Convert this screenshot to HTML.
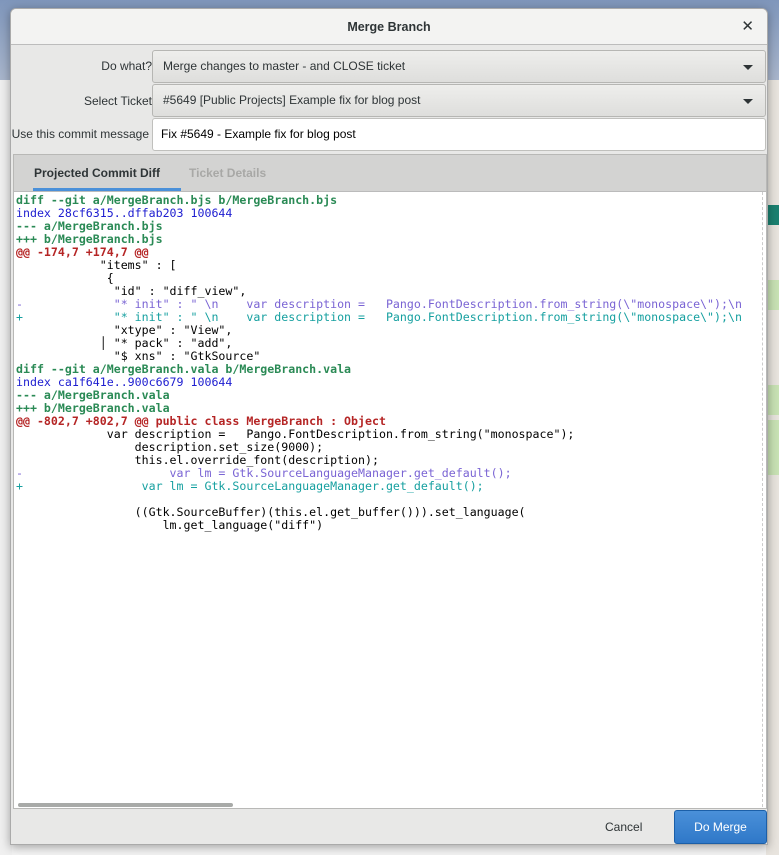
<!DOCTYPE html>
<html><head><meta charset="utf-8"><style>
*{box-sizing:border-box;margin:0;padding:0}
body{width:779px;height:855px;overflow:hidden;position:relative;background:#f4f4f4;font-family:"Liberation Sans","DejaVu Sans",sans-serif;font-size:12px;color:#2e3436}
.bgtop{position:absolute;left:0;top:0;width:779px;height:80px;background:linear-gradient(#7f96bb,#a9b6cc)}
.bgleft{position:absolute;left:0;top:80px;width:12px;height:775px;background:#f0f0f0}
.bgright{position:absolute;left:766px;top:80px;width:13px;height:775px;background:#e8e4de}
.g{position:absolute;left:766px;width:13px;background:#c8e2b4}
.dlg{position:absolute;left:10px;top:8px;width:758px;height:837px;background:#e8e8e7;border:1px solid #aaa;border-radius:6px 6px 0 0;box-shadow:0 2px 10px rgba(0,0,0,.35);overflow:hidden}
.hdr{position:absolute;left:0;top:0;width:100%;height:36px;background:#f3f3f2;border-bottom:1px solid #bcbcbc;text-align:center;line-height:36px;font-weight:bold;font-size:12.5px;color:#2e3436}
.x{position:absolute;right:13px;top:0;font-size:15px;font-weight:bold}
.lbl{position:absolute;right:615px;font-size:12px;color:#2e3436;text-align:right;white-space:nowrap}
.combo{position:absolute;left:141px;width:614px;height:33px;border:1px solid #b6b6b3;border-radius:3px;background:linear-gradient(#eeeeec,#dededc);padding-left:10px;line-height:31px;font-size:12px}
.combo:after{content:"";position:absolute;right:12px;top:14px;border-left:5px solid transparent;border-right:5px solid transparent;border-top:5px solid #2e3436}
.entry{position:absolute;left:141px;top:109px;width:614px;height:33px;border:1px solid #c0c0bd;border-radius:3px;background:#fff;padding-left:8px;line-height:31px;color:#000}
.nb{position:absolute;left:2px;top:145px;width:754px;height:655px;border:1px solid #b8b8b6;background:#fff}
.tabs{height:37px;background:#d3d3d2;border-bottom:1px solid #bbb;position:relative}
.tab{position:absolute;top:0;line-height:37px;font-weight:bold;font-size:12px}
.ul{position:absolute;left:19px;top:33px;width:148px;height:3px;background:#4a90d9}
pre{font-family:"DejaVu Sans Mono","Liberation Mono",monospace;font-size:11.6px;line-height:13px;padding:2px 0 0 2px;color:#000;white-space:pre;overflow:hidden}
.h{color:#2a8a55;font-weight:bold}.i{color:#1d1dd0}.a{color:#b52525;font-weight:bold}.m{color:#7a64d4}.p{color:#16a0a0}
.vs{position:absolute;right:3px;top:37px;height:615px;border-left:1px dashed #ccc}
.sb{position:absolute;left:4px;top:648px;width:215px;height:4px;border-radius:2px;background:#a8aaa8}
.foot{position:absolute;left:0;top:800px;width:100%;height:37px;background:#e8e8e7}
.cancel{position:absolute;left:594px;top:0;line-height:36px;font-size:12px}
.ok{position:absolute;left:663px;top:1px;width:93px;height:34px;border:1px solid #1b5fa8;border-radius:3px;background:linear-gradient(#4a90d9,#2f78c8);color:#fff;text-align:center;line-height:32px;font-size:12px}
</style></head><body>
<div class="bgtop"></div><div class="bgleft"></div><div class="bgright"></div>
<div class="g" style="top:205px;height:20px;background:#1a8070"></div>
<div class="g" style="top:280px;height:30px"></div>
<div class="g" style="top:385px;height:30px"></div>
<div class="g" style="top:420px;height:55px"></div>
<div class="dlg">
<div class="hdr">Merge Branch<span class="x">✕</span></div>
<div class="lbl" style="top:50px">Do what?</div>
<div class="combo" style="top:41px">Merge changes to master - and CLOSE ticket</div>
<div class="lbl" style="top:85px">Select Ticket</div>
<div class="combo" style="top:75px">#5649 [Public Projects] Example fix for blog post</div>
<div class="lbl" style="top:118px;right:618px">Use this commit message</div>
<div class="entry">Fix #5649 - Example fix for blog post</div>
<div class="nb">
<div class="tabs"><span class="tab" style="left:20px">Projected Commit Diff</span><span class="tab" style="left:175px;color:#a8a8a6">Ticket Details</span><div class="ul"></div></div>
<pre><span class="h">diff --git a/MergeBranch.bjs b/MergeBranch.bjs</span>
<span class="i">index 28cf6315..dffab203 100644</span>
<span class="h">--- a/MergeBranch.bjs</span>
<span class="h">+++ b/MergeBranch.bjs</span>
<span class="a">@@ -174,7 +174,7 @@</span>
            "items" : [
             {
              "id" : "diff_view",
<span class="m">-             "* init" : " \n    var description =   Pango.FontDescription.from_string(\"monospace\");\n</span>
<span class="p">+             "* init" : " \n    var description =   Pango.FontDescription.from_string(\"monospace\");\n</span>
              "xtype" : "View",
            │ "* pack" : "add",
              "$ xns" : "GtkSource"
<span class="h">diff --git a/MergeBranch.vala b/MergeBranch.vala</span>
<span class="i">index ca1f641e..900c6679 100644</span>
<span class="h">--- a/MergeBranch.vala</span>
<span class="h">+++ b/MergeBranch.vala</span>
<span class="a">@@ -802,7 +802,7 @@ public class MergeBranch : Object</span>
             var description =   Pango.FontDescription.from_string("monospace");
                 description.set_size(9000);
                 this.el.override_font(description);
<span class="m">-                     var lm = Gtk.SourceLanguageManager.get_default();</span>
<span class="p">+                 var lm = Gtk.SourceLanguageManager.get_default();</span>

                 ((Gtk.SourceBuffer)(this.el.get_buffer())).set_language(
                     lm.get_language("diff")</pre>
<div class="vs"></div><div class="sb"></div>
</div>
<div class="foot"><span class="cancel">Cancel</span><div class="ok">Do Merge</div></div>
</div>
</body></html>
